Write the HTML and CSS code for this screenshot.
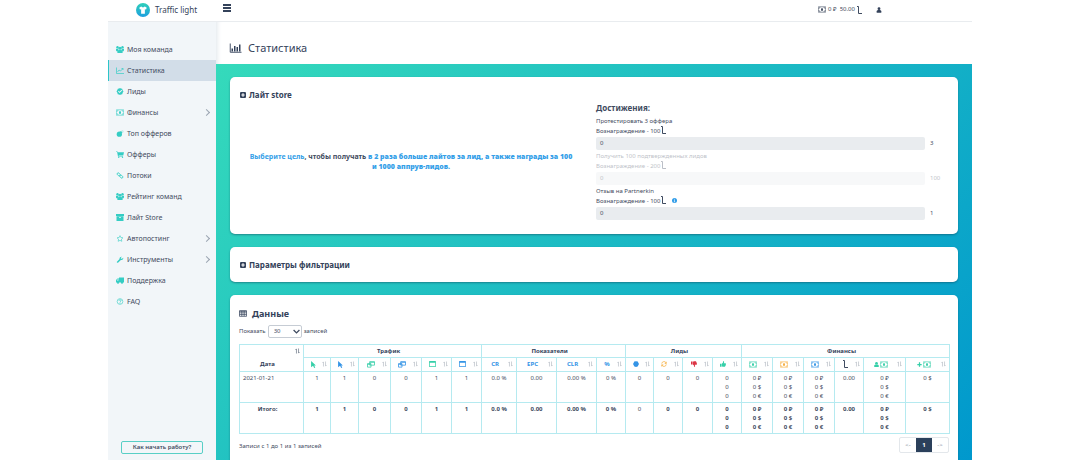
FILE: index.html
```html
<!DOCTYPE html>
<html lang="ru">
<head>
<meta charset="utf-8">
<meta name="viewport" content="width=device-width, initial-scale=1">
<title>Статистика</title>
<link rel="stylesheet" href="styles.css">
</head>
<body>
<svg class="sprite" aria-hidden="true">
  <symbol id="team" viewBox="0 0 16 14"><circle cx="3" cy="2.500" r="2.400"/><circle cx="13" cy="2.500" r="2.400"/><circle cx="8" cy="4.500" r="3.200"/><path d="M0 5.500h4l1 2-2 3H1L0 9zM16 5.500h-4l-1 2 2 3h2l1-2zM2.500 13c0-4 2-5 5.500-5s5.500 1 5.500 5l-1 1h-9z"/></symbol>
  <symbol id="line" viewBox="0 0 16 14"><path d="M1 1v12h15M3 10l3-4 3 2 5-5M11 3h3v3" fill="none" stroke="currentColor" stroke-width="1.400"/></symbol>
  <symbol id="check" viewBox="0 0 16 16"><path fill-rule="evenodd" d="M8 0l2 1 3 .5.8 2.800L16 8l-2 3-.8 3L10 15l-2 1-2-1-3.200-1L2 11 0 8l2-3.500L3 1.500 6 1zM3.500 8L7 11.500 13 5.500 11.500 4 7 8.500 5 6.500z"/></symbol>
  <symbol id="money" viewBox="0 0 16 12"><path d="M.6.6h14.800v10.800H.6zM1 4q3 0 3-3M15 4q-3 0-3-3M1 8q3 0 3 3M15 8q-3 0-3 3" fill="none" stroke="currentColor" stroke-width="1.200"/><ellipse cx="8" cy="6" rx="2" ry="3"/></symbol>
  <symbol id="bomb" viewBox="0 0 16 16"><circle cx="6.500" cy="9.500" r="6"/><path d="M8 4l2-2 4 4-2 2z"/><path d="M12 4l2-2M15 4h1M13 0v1" stroke="currentColor" stroke-width="1.300"/></symbol>
  <symbol id="cart" viewBox="0 0 16 14"><path d="M0 1h3l.5 1.500H16L14.500 9H5.500v1H14v1.200H4L2.200 2.200H0z"/><circle cx="5.500" cy="12.500" r="1.400"/><circle cx="13" cy="12.500" r="1.400"/></symbol>
  <symbol id="chain" viewBox="0 0 16 16"><g fill="none" stroke="currentColor" stroke-width="2"><rect x="1" y="3" width="8" height="5" rx="2.500" transform="rotate(45 5 5.500)"/><rect x="7" y="8" width="8" height="5" rx="2.500" transform="rotate(45 11 10.500)"/></g></symbol>
  <symbol id="archive" viewBox="0 0 16 14"><path fill-rule="evenodd" d="M0 0h16v4H0zM1 4.500h14V14H1zM6 6v1.500h4V6z"/></symbol>
  <symbol id="star" viewBox="0 0 16 16"><path d="M8 1.500l2 4.300 4.700.6-3.400 3.200.8 4.800L8 12.200l-4.100 2.200.8-4.800L1.300 6.400 6 5.800z" fill="none" stroke="currentColor" stroke-width="1.400"/></symbol>
  <symbol id="wrench" viewBox="0 0 16 16"><path d="M1 13l6-6c-.8-3 1.500-6 5.500-5.500L10 4v2.500h2.500L15.500 4c.5 4-2.500 6-5.500 5l-6 6c-2 1.500-4.500-.5-3-2z"/></symbol>
  <symbol id="truck" viewBox="0 0 16 14"><path fill-rule="evenodd" d="M6 1h10v10H0V6l3-3h3zM1.500 7H5V4.500H3.500z"/><circle cx="4" cy="11.500" r="2.200"/><circle cx="12" cy="11.500" r="2.200"/></symbol>
  <symbol id="help" viewBox="0 0 16 16"><circle cx="8" cy="8" r="6.500" fill="none" stroke="currentColor" stroke-width="1.400"/><path d="M5.500 6.200c0-3 5-3 5 0C10.500 8 8 7.800 8 10M8 11v1.800" fill="none" stroke="currentColor" stroke-width="1.700"/></symbol>
  <symbol id="plusbox" viewBox="0 0 16 16"><path fill-rule="evenodd" d="M2 0h12l2 2v12l-2 2H2l-2-2V2zM6.500 3.500v3h-3v3h3v3h3v-3h3v-3h-3v-3z"/></symbol>
  <symbol id="lait" viewBox="0 0 5 8"><path d="M0 .5h1.500v7H5" fill="none" stroke="currentColor"/></symbol>
  <symbol id="user" viewBox="0 0 14 16"><circle cx="7" cy="4.500" r="3.800"/><path d="M1 15c-2-6 2-8 6-7 4-1 8 1 6 7z"/></symbol>
  <symbol id="sort" viewBox="0 0 12 14"><path d="M3.500 13V2M1 4.500L3.500 2M8.500 1v11M11 9.500L8.500 12" fill="none" stroke="currentColor" stroke-width="1.600"/></symbol>
  <symbol id="pointer" viewBox="0 0 11 16"><path d="M0 0l11 10H7l2.500 5-2.500 1-2.500-5L0 14z"/></symbol>
  <symbol id="clone" viewBox="0 0 18 16"><path d="M6 1.500h11v8H6zM1 6h8v8H1zM6 3h11M1 7.500h8" fill="none" stroke="currentColor" stroke-width="1.800"/></symbol>
  <symbol id="window" viewBox="0 0 16 14"><path fill-rule="evenodd" d="M1 0h14l1 1v12l-1 1H1l-1-1V1zM1.700 4v8.300h12.600V4z"/></symbol>
  <symbol id="dot" viewBox="0 0 16 16"><path d="M8 0l2 1 3 .5.8 2.800L16 8l-2 3-.8 3L10 15l-2 1-2-1-3.200-1L2 11 0 8l2-3.500L3 1.500 6 1z"/></symbol>
  <symbol id="refresh" viewBox="0 0 16 16"><path d="M2 7c0-6 9-7 11-3M14 9c0 6-9 7-11 3" fill="none" stroke="currentColor" stroke-width="2"/><path d="M15 1v6H9zM1 15V9h6z"/></symbol>
  <symbol id="thumb" viewBox="0 0 16 16"><path d="M0 7h4v8H0zM5 7l3-3 .5-4c3 0 3 3 1.500 6h4.500c2 1 1.500 3 .8 4 .2 2-.8 3-1.300 3.500 0 2-2 2-4 2-2.500 0-3-1-5-1z"/></symbol>
  <symbol id="plus" viewBox="0 0 16 16"><path d="M6 1h4v5h5v4h-5v5H6v-5H1V6h5z"/></symbol>
  <symbol id="grid" viewBox="0 0 18 16"><path d="M1 1.500h16v13H1zM1 3h16M1 6.500h16M1 10.500h16M6.300 2v12M11.700 2v12" fill="none" stroke="currentColor" stroke-width="1.600"/></symbol>
</svg>

<div class="app">
  <header class="topbar">
    <a class="brand" href="#">
      <svg class="brand-logo" viewBox="0 0 30 30" aria-hidden="true"><defs><linearGradient id="lg" x1="0" y1="0" x2="0" y2="1"><stop offset="0" stop-color="#2fd0b8"/><stop offset="1" stop-color="#1d9fe0"/></linearGradient></defs><circle cx="15" cy="15" r="15" fill="url(#lg)"/><path d="M7 10l4-2.500 4 2 4-2 4 2.500-1.500 4-2.500-.5V23h-8v-9.500l-2.500.5z" fill="#fff"/></svg>
      <span>Traffic light</span>
    </a>
    <button class="burger" type="button" aria-label="Меню"><span></span><span></span><span></span></button>
    <div class="account">
      <span class="balance"><svg class="icon"><use href="#money"/></svg> 0 ₽ &nbsp;50.00<svg class="lait"><use href="#lait"/></svg></span>
      <button class="plain" type="button" aria-label="Профиль"><svg class="icon user"><use href="#user"/></svg></button>
    </div>
  </header>

  <aside class="sidebar">
    <nav class="menu">
      <a href="#"><svg class="icon"><use href="#team"/></svg>Моя команда</a>
      <a href="#" class="active" aria-current="page"><svg class="icon"><use href="#line"/></svg>Статистика</a>
      <a href="#"><svg class="icon"><use href="#check"/></svg>Лиды</a>
      <a href="#" class="more"><svg class="icon"><use href="#money"/></svg>Финансы</a>
      <a href="#"><svg class="icon"><use href="#bomb"/></svg>Топ офферов</a>
      <a href="#"><svg class="icon"><use href="#cart"/></svg>Офферы</a>
      <a href="#"><svg class="icon"><use href="#chain"/></svg>Потоки</a>
      <a href="#"><svg class="icon"><use href="#team"/></svg>Рейтинг команд</a>
      <a href="#"><svg class="icon"><use href="#archive"/></svg>Лайт Store</a>
      <a href="#" class="more"><svg class="icon"><use href="#star"/></svg>Автопостинг</a>
      <a href="#" class="more"><svg class="icon"><use href="#wrench"/></svg>Инструменты</a>
      <a href="#"><svg class="icon"><use href="#truck"/></svg>Поддержка</a>
      <a href="#"><svg class="icon"><use href="#help"/></svg>FAQ</a>
    </nav>
    <button class="start" type="button">Как начать работу?</button>
  </aside>

  <main class="main">
    <div class="page-head">
      <svg class="head-icon" viewBox="0 0 24 20" aria-hidden="true"><path d="M1.500 1v17.500H24" fill="none" stroke="currentColor" stroke-width="1.800"/><path d="M4 11h3v6H4zM9 6h3v11H9zM14 8h3v9h-3zM19 3h3v14h-3z"/></svg>
      <h1>Статистика</h1>
    </div>
    <div class="content">
      <section class="card store">
        <h2 class="card-title"><svg class="plusbox"><use href="#plusbox"/></svg>Лайт store</h2>
        <div class="store-grid">
          <p class="pitch"><a href="#">Выберите цель</a>, чтобы получать <b>в 2 раза больше лайтов за лид, а также награды за 100 и&nbsp;1000 аппрув-лидов.</b></p>
          <div class="goals">
            <h3>Достижения:</h3>
            <div class="goal">
              <p>Протестировать 3 оффера</p>
              <p>Вознаграждение - 100<svg class="lait"><use href="#lait"/></svg></p>
              <div class="goal-row"><div class="bar" role="progressbar" aria-label="Протестировать 3 оффера" aria-valuenow="0" aria-valuemax="3">0</div><span>3</span></div>
            </div>
            <div class="goal disabled">
              <p>Получить 100 подтвержденных лидов</p>
              <p>Вознаграждение - 200<svg class="lait"><use href="#lait"/></svg></p>
              <div class="goal-row"><div class="bar" role="progressbar" aria-label="Получить 100 подтвержденных лидов" aria-valuenow="0" aria-valuemax="100">0</div><span>100</span></div>
            </div>
            <div class="goal">
              <p>Отзыв на Partnerkin</p>
              <p>Вознаграждение - 100<svg class="lait"><use href="#lait"/></svg><svg class="info" viewBox="0 0 12 12"><circle cx="6" cy="6" r="6" fill="#2d9be8"/><path d="M6 2v2M4.500 5.500H6V9M4.500 9h3" stroke="#fff" stroke-width="1.500" fill="none"/></svg></p>
              <div class="goal-row"><div class="bar" role="progressbar" aria-label="Отзыв на Partnerkin" aria-valuenow="0" aria-valuemax="1">0</div><span>1</span></div>
            </div>
          </div>
        </div>
      </section>

      <section class="card filter">
        <h2 class="card-title"><svg class="plusbox"><use href="#plusbox"/></svg>Параметры фильтрации</h2>
      </section>

      <section class="card data">
        <h2 class="data-title"><svg class="grid-icon"><use href="#grid"/></svg>Данные</h2>
        <div class="length">
          <label for="length">Показать</label>
          <span class="select"><select id="length"><option>30</option><option>50</option><option>100</option></select><svg viewBox="0 0 12 8" aria-hidden="true"><path d="M1 1.500l5 5 5-5" fill="none" stroke="currentColor" stroke-width="2.200"/></svg></span>
          <span>записей</span>
        </div>
        <table class="stats">
          <colgroup>
            <col class="w64"><col class="w27"><col class="w28"><col class="w32"><col class="w31"><col class="w30"><col class="w30">
            <col class="w35"><col class="w40"><col class="w40"><col class="w29">
            <col class="w28"><col class="w29"><col class="w30"><col class="w29">
            <col class="w31"><col class="w31"><col class="w31"><col class="w29"><col class="w42"><col class="w44">
          </colgroup>
          <thead>
            <tr class="groups">
              <th rowspan="2" class="date"><button class="sort on" aria-label="Сортировать"><svg><use href="#sort"/></svg></button><span>Дата</span></th>
              <th colspan="6">Трафик</th><th colspan="4">Показатели</th><th colspan="4">Лиды</th><th colspan="6">Финансы</th>
            </tr>
            <tr class="keys">
              <th><div class="key green"><span><svg class="point"><use href="#pointer"/></svg></span><button class="sort" aria-label="Сортировать"><svg><use href="#sort"/></svg></button></div></th>
              <th><div class="key blue"><span><svg class="point"><use href="#pointer"/></svg></span><button class="sort" aria-label="Сортировать"><svg><use href="#sort"/></svg></button></div></th>
              <th><div class="key green"><span><svg class="icon"><use href="#clone"/></svg></span><button class="sort" aria-label="Сортировать"><svg><use href="#sort"/></svg></button></div></th>
              <th><div class="key blue"><span><svg class="icon"><use href="#clone"/></svg></span><button class="sort" aria-label="Сортировать"><svg><use href="#sort"/></svg></button></div></th>
              <th><div class="key green"><span><svg class="window"><use href="#window"/></svg></span><button class="sort" aria-label="Сортировать"><svg><use href="#sort"/></svg></button></div></th>
              <th><div class="key blue"><span><svg class="window"><use href="#window"/></svg></span><button class="sort" aria-label="Сортировать"><svg><use href="#sort"/></svg></button></div></th>
              <th><div class="key blue"><span>CR</span><button class="sort" aria-label="Сортировать"><svg><use href="#sort"/></svg></button></div></th>
              <th><div class="key blue"><span>EPC</span><button class="sort" aria-label="Сортировать"><svg><use href="#sort"/></svg></button></div></th>
              <th><div class="key blue"><span>CLR</span><button class="sort" aria-label="Сортировать"><svg><use href="#sort"/></svg></button></div></th>
              <th><div class="key blue"><span>%</span><button class="sort" aria-label="Сортировать"><svg><use href="#sort"/></svg></button></div></th>
              <th><div class="key blue"><span><svg class="small"><use href="#dot"/></svg></span><button class="sort" aria-label="Сортировать"><svg><use href="#sort"/></svg></button></div></th>
              <th><div class="key orange"><span><svg class="small"><use href="#refresh"/></svg></span><button class="sort" aria-label="Сортировать"><svg><use href="#sort"/></svg></button></div></th>
              <th><div class="key red"><span><svg class="small down"><use href="#thumb"/></svg></span><button class="sort" aria-label="Сортировать"><svg><use href="#sort"/></svg></button></div></th>
              <th><div class="key green"><span><svg class="small"><use href="#thumb"/></svg></span><button class="sort" aria-label="Сортировать"><svg><use href="#sort"/></svg></button></div></th>
              <th><div class="key green"><span><svg class="icon"><use href="#money"/></svg></span><button class="sort" aria-label="Сортировать"><svg><use href="#sort"/></svg></button></div></th>
              <th><div class="key orange"><span><svg class="icon"><use href="#money"/></svg></span><button class="sort" aria-label="Сортировать"><svg><use href="#sort"/></svg></button></div></th>
              <th><div class="key blue"><span><svg class="icon"><use href="#money"/></svg></span><button class="sort" aria-label="Сортировать"><svg><use href="#sort"/></svg></button></div></th>
              <th><div class="key"><span><svg class="lait"><use href="#lait"/></svg></span><button class="sort" aria-label="Сортировать"><svg><use href="#sort"/></svg></button></div></th>
              <th><div class="key green"><span><svg class="point"><use href="#user"/></svg><svg class="icon"><use href="#money"/></svg></span><button class="sort" aria-label="Сортировать"><svg><use href="#sort"/></svg></button></div></th>
              <th><div class="key green"><span><svg class="point"><use href="#plus"/></svg><svg class="icon"><use href="#money"/></svg></span><button class="sort" aria-label="Сортировать"><svg><use href="#sort"/></svg></button></div></th>
            </tr>
          </thead>
          <tbody>
            <tr>
              <td class="day">2021-01-21</td><td>1</td><td>1</td><td>0</td><td>0</td><td>1</td><td>1</td>
              <td>0.0 %</td><td>0.00</td><td>0.00 %</td><td>0 %</td>
              <td>0</td><td>0</td><td>0</td><td>0<br>0<br>0</td>
              <td>0 ₽<br>0 $<br>0 €</td><td>0 ₽<br>0 $<br>0 €</td><td>0 ₽<br>0 $<br>0 €</td><td>0.00</td><td>0 ₽<br>0 $<br>0 €</td><td>0 $</td>
            </tr>
          </tbody>
          <tfoot>
            <tr>
              <th>Итого:</th><td>1</td><td>1</td><td>0</td><td>0</td><td>1</td><td>1</td>
              <td>0.0 %</td><td>0.00</td><td>0.00 %</td><td>0 %</td>
              <td class="regular">0</td><td>0</td><td>0</td><td>0<br>0<br>0</td>
              <td>0 ₽<br>0 $<br>0 €</td><td>0 ₽<br>0 $<br>0 €</td><td>0 ₽<br>0 $<br>0 €</td><td>0.00</td><td>0 ₽<br>0 $<br>0 €</td><td>0 $</td>
            </tr>
          </tfoot>
        </table>
        <div class="table-foot">
          <span>Записи с 1 до 1 из 1 записей</span>
          <nav class="pager" aria-label="Страницы"><button type="button">&lt;-</button><button type="button" class="current" aria-current="page">1</button><button type="button">-&gt;</button></nav>
        </div>
      </section>
    </div>
  </main>
</div>
</body>
</html>
```

FILE: styles.css
```css
* { box-sizing: border-box; }

body {
  margin: 0;
  background: #fff;
  color: #3f4b60;
  font: 7px/9px "Noto Sans", "Open Sans", sans-serif;
}

h1, h2, h3, p { margin: 0; }
a { color: inherit; text-decoration: none; }
button, select { font: inherit; color: inherit; }
button { margin: 0; padding: 0; border: 0; background: none; cursor: pointer; }
svg { fill: currentColor; flex: none; }

.sprite { display: none; }
.icon { width: 8px; height: 7px; }
.window { width: 7px; height: 6px; }
.small { width: 6px; height: 6px; }
.point { width: 5px; height: 7px; }
.lait { width: 5px; height: 8px; margin-left: 1px; vertical-align: -1px; }

.app {
  width: 80%;
  height: 100vh;
  margin: 0 auto;
  display: grid;
  grid-template: 22px minmax(0, 1fr) / 108px minmax(0, 1fr);
}

.topbar {
  grid-column: 1 / -1;
  display: flex;
  align-items: flex-start;
  border-bottom: 1px solid #e9ecef;
}
.brand {
  width: 108px;
  padding: 2px 0 0 28px;
  display: flex;
  align-items: center;
  gap: 5px;
  font-size: 8px;
  line-height: 15px;
  color: #34425a;
}
.brand-logo { width: 14px; height: 14px; }
.burger {
  width: 8px;
  margin: 4px 0 0 7px;
  display: flex;
  flex-direction: column;
  gap: 1px;
}
.burger span { width: 100%; height: 2px; background: #34425a; }
.account {
  margin: 5px 90px 0 auto;
  display: flex;
  align-items: center;
  gap: 14px;
}
.balance { display: flex; align-items: center; gap: 2px; font-size: 6px; }
.balance .lait { margin-left: 0; }
.plain { display: flex; color: #34425a; }
.user { width: 6px; height: 6px; }

.sidebar {
  display: flex;
  flex-direction: column;
  justify-content: space-between;
  padding: 17px 0 6px;
  background: #f2f6f9;
}
.menu a {
  display: flex;
  align-items: center;
  gap: 3px;
  height: 21px;
  padding: 0 7px;
  border-left: 1px solid transparent;
}
.menu .icon { color: #35cdc4; }
.menu .active { background: #d2dde8; border-left-color: #2cc5c9; }
.more::after {
  content: "";
  width: 4px;
  height: 4px;
  margin-left: auto;
  border: solid #9aa4b1;
  border-width: 1px 1px 0 0;
  transform: rotate(45deg);
}
.start {
  margin: 0 13px;
  height: 13px;
  border: 1px solid #58cfc6;
  border-radius: 2px;
  font-size: 6px;
  font-weight: 600;
}

.main { display: flex; flex-direction: column; min-height: 0; }
.page-head {
  height: 42px;
  padding: 9px 13px 0;
  display: flex;
  align-items: center;
  gap: 6px;
  flex: none;
  box-shadow: inset 5px 0 5px -4px #dfe5ea;
  color: #34425a;
}
.page-head h1 { font-size: 11px; line-height: 16px; font-weight: 400; }
.head-icon { width: 13px; height: 10px; }

.content {
  flex: 1;
  min-height: 0;
  padding: 13px 14px 0;
  display: flex;
  flex-direction: column;
  gap: 13px;
  overflow-y: auto;
  scrollbar-width: none;
  background: linear-gradient(135deg, #35dabb, #0098cd);
}
.card {
  flex: none;
  padding: 13px 9px;
  border-radius: 5px;
  background: #fff;
  box-shadow: 0 1px 2px rgba(20, 70, 90, .5);
}
.card-title {
  display: flex;
  align-items: center;
  gap: 3px;
  padding-left: 1px;
  font-size: 8px;
  line-height: 9px;
  color: #34425a;
}
.plusbox { width: 6px; height: 6px; }

.store { padding-bottom: 14px; }
.store-grid {
  display: grid;
  grid-template-columns: 344px minmax(0, 1fr);
  gap: 13px;
}
.pitch {
  align-self: center;
  padding-top: 5px;
  line-height: 10px;
  font-weight: 700;
  text-align: center;
}
.pitch a, .pitch b { color: #35a0e8; }
.goals { padding: 4px 9px 0 0; font-size: 6px; }
.goals h3 { margin-bottom: 5px; font-size: 8px; line-height: 9px; }
.goal { margin-bottom: 2px; }
.goal:last-child { margin-bottom: 0; }
.goal p { height: 9px; white-space: nowrap; }
.goal-row { display: flex; align-items: center; gap: 5px; margin-top: 2px; }
.goal-row span { width: 10px; }
.goal-row .bar {
  flex: 1;
  padding: 2px 4px;
  border-radius: 2px;
  background: #e9ecef;
}
.disabled { opacity: .35; }
.info { width: 5px; height: 5px; margin-left: 6px; }

.data { padding-bottom: 24px; }
.data-title {
  display: flex;
  align-items: center;
  gap: 5px;
  font-size: 9px;
  line-height: 11px;
  color: #34425a;
}
.grid-icon { width: 8px; height: 7px; }
.length { display: flex; align-items: center; gap: 2px; margin: 6px 0; font-size: 6px; }
.select { display: flex; position: relative; }
.select select {
  width: 34px;
  height: 13px;
  padding: 0 5px;
  appearance: none;
  border: 1px solid #c6ccd4;
  border-radius: 2px;
  background: #fff;
}
.select svg { position: absolute; right: 2px; top: 4px; width: 7px; height: 5px; pointer-events: none; }

.stats { width: 100%; table-layout: fixed; border-collapse: collapse; font-size: 6px; }
.w27 { width: 27px; } .w28 { width: 28px; } .w29 { width: 29px; } .w30 { width: 30px; }
.w31 { width: 31px; } .w32 { width: 32px; } .w35 { width: 35px; } .w40 { width: 40px; }
.w42 { width: 42px; } .w44 { width: 44px; } .w64 { width: 64px; }
.stats th, .stats td {
  padding: 2px 0 1px;
  border: 1px solid #b5eaf0;
  text-align: center;
  vertical-align: top;
  white-space: nowrap;
}
.stats .groups th { padding: 2px 8px 1px 0; color: #34425a; }
.stats .keys th { padding: 1px 0 2px; }
.stats .day { padding-left: 3px; text-align: left; }
.stats tfoot th { padding-right: 8px; }
.stats tfoot td { font-weight: 700; }
.stats tfoot .regular { font-weight: 400; }
.stats .groups .date { padding: 3px 3px 0 0; }
.date span { display: block; padding: 6px 5px 0 0; }
.date .sort { margin-left: auto; }
.sort { display: block; color: #b3bac3; }
.sort.on { color: #5f6b7c; }
.sort svg { display: block; width: 5px; height: 6px; }
.key { display: flex; align-items: center; height: 10px; padding-right: 3px; }
.key span { flex: 1; display: flex; justify-content: center; align-items: center; gap: 1px; }
.green { color: #35cfa8; }
.blue { color: #3494e6; }
.orange { color: #f6ad3c; }
.red { color: #dc3545; }
.down { transform: scaleY(-1); }

.table-foot {
  display: flex;
  justify-content: space-between;
  align-items: flex-start;
  padding-top: 3px;
  font-size: 6px;
}
.table-foot > span { padding-top: 5px; }
.pager { display: flex; border: 1px solid #e3e7eb; border-radius: 2px; }
.pager button { width: 16px; height: 14px; color: #7e8a99; }
.pager .current { background: #2b405b; color: #fff; font-weight: 700; }
```
